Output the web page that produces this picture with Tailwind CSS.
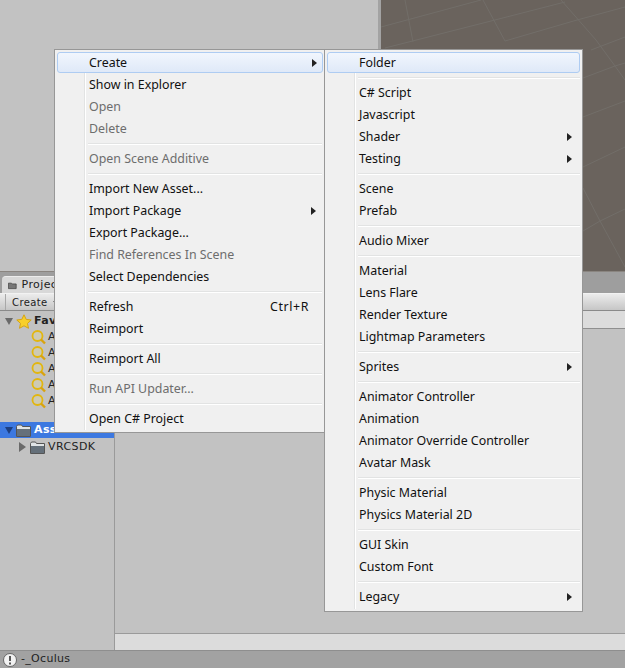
<!DOCTYPE html>
<html lang="en">
<head>
  <meta charset="UTF-8" />
  <title>Unity Create menu</title>
  <script src="https://cdn.jsdelivr.net/npm/@tailwindcss/browser@4"></script>
</head>
<body class="relative w-[625px] h-[668px] overflow-hidden bg-[#c2c2c2] font-['DejaVu_Sans',sans-serif] text-[11px] text-[#222]">

  <!-- editor behind the menus -->
  <div class="flex flex-col h-full">
    <div class="flex h-[271px] shrink-0">
      <div class="w-[381px] bg-[#c2c2c2] border-r-[3px] border-[#a3a3a3]"></div>
      <div class="flex-1 bg-[#6a635d]">
        <svg class="block" width="244" height="271" viewBox="381 0 244 271" fill="none" stroke="#726e69" stroke-width="1">
          <path d="M381 27L481 0M385 48L491 21L565 2M505 41L577 20L625 7M591 50L625 37" />
          <path d="M583 78L615 66L625 63M583 117L625 101M583 167L625 147M583 231L600 221L625 209" />
          <path d="M405 0L413 42M483 0L505 41M561 0L596 40L615 66L625 80M583 188L600 221L625 267" />
        </svg>
      </div>
    </div>
    <div class="flex flex-col flex-1 min-h-0">
      <div class="flex items-end h-[22px] shrink-0 bg-[#9e9e9e] border-t border-[#8a8580]">
        <div class="flex items-center gap-[5px] ml-[2px] pl-[6px] h-[17px] w-[60px] bg-[#d8d8d8] border-t border-[#ececec] rounded-t-sm">
          <svg width="11" height="9" viewBox="0 0 11 9"><path d="M.5 1.500h4l1 1h5v6h-10z" fill="#777" stroke="#444"/></svg>
          <span class="tracking-[0.4px]">Project</span>
        </div>
      </div>
      <div class="flex items-center h-[18px] shrink-0 bg-gradient-to-b from-[#ececec] to-[#c6c6c6] border-t border-[#f2f2f2] border-b-[#8a8a8a] border-b text-[10px] tracking-[0.4px]">
        <div class="flex items-center h-full pl-[6px] pr-[5px] ml-[5px] border-l border-[#a8a8a8]">Create</div>
        <svg width="5" height="3" viewBox="0 0 5 3"><path d="M0 0h5L2.500 3z" fill="#555"/></svg>
      </div>
      <div class="flex flex-1 min-h-0">
        <div class="flex flex-col w-[115px] shrink-0 border-r border-[#9a9a9a] bg-[#c2c2c2] pt-[2px] tracking-[0.4px]">
          <div class="flex items-center h-[16px] pl-[5px] font-bold">
            <svg class="shrink-0" width="8" height="7" viewBox="0 0 8 7"><path d="M0 0h8L4 7z" fill="#6a6a6a"/></svg>
            <svg class="shrink-0 ml-[3px]" width="16" height="15" viewBox="0 0 16 15"><path d="M8 .8l2.200 4.600 5 .6-3.700 3.400 1 4.900L8 11.800l-4.500 2.500 1-4.900L.8 6l5-.6z" fill="#f8cf2a" stroke="#d5a414"/></svg>
            <span class="ml-[2px]">Favorites</span>
          </div>
          <div class="flex items-center h-[16px] pl-[31px] gap-[2px]">
            <svg class="shrink-0" width="15" height="15" viewBox="0 0 15 15"><circle cx="6.500" cy="6" r="5" fill="#cdcab4" stroke="#e2b60f" stroke-width="1.800"/><path d="M10 9.500l4 4" stroke="#d9a30e" stroke-width="2.400"/></svg><span>All</span>
          </div>
          <div class="flex items-center h-[16px] pl-[31px] gap-[2px]">
            <svg class="shrink-0" width="15" height="15" viewBox="0 0 15 15"><circle cx="6.500" cy="6" r="5" fill="#cdcab4" stroke="#e2b60f" stroke-width="1.800"/><path d="M10 9.500l4 4" stroke="#d9a30e" stroke-width="2.400"/></svg><span>All</span>
          </div>
          <div class="flex items-center h-[16px] pl-[31px] gap-[2px]">
            <svg class="shrink-0" width="15" height="15" viewBox="0 0 15 15"><circle cx="6.500" cy="6" r="5" fill="#cdcab4" stroke="#e2b60f" stroke-width="1.800"/><path d="M10 9.500l4 4" stroke="#d9a30e" stroke-width="2.400"/></svg><span>All</span>
          </div>
          <div class="flex items-center h-[16px] pl-[31px] gap-[2px]">
            <svg class="shrink-0" width="15" height="15" viewBox="0 0 15 15"><circle cx="6.500" cy="6" r="5" fill="#cdcab4" stroke="#e2b60f" stroke-width="1.800"/><path d="M10 9.500l4 4" stroke="#d9a30e" stroke-width="2.400"/></svg><span>All</span>
          </div>
          <div class="flex items-center h-[16px] pl-[31px] gap-[2px]">
            <svg class="shrink-0" width="15" height="15" viewBox="0 0 15 15"><circle cx="6.500" cy="6" r="5" fill="#cdcab4" stroke="#e2b60f" stroke-width="1.800"/><path d="M10 9.500l4 4" stroke="#d9a30e" stroke-width="2.400"/></svg><span>All</span>
          </div>
          <div class="flex items-center h-[16px] mt-[13px] pl-[5px] bg-[#3c78e0] text-white font-bold">
            <svg class="shrink-0" width="8" height="7" viewBox="0 0 8 7"><path d="M0 0h8L4 7z" fill="#1d3f80"/></svg>
            <svg class="shrink-0 ml-[3px]" width="15" height="13" viewBox="0 0 15 13"><path d="M.5 2.500l1-1.500h4l1 1.500h8v10h-14z" fill="#dfe3e5" stroke="#555"/><path d="M1 5h13v7H1z" fill="#65707a"/></svg>
            <span class="ml-[3px]">Assets</span>
          </div>
          <div class="flex items-center h-[16px] mt-[1px] pl-[19px]">
            <svg class="shrink-0" width="7" height="10" viewBox="0 0 7 10"><path d="M0 0l7 5-7 5z" fill="#6a6a6a"/></svg>
            <svg class="shrink-0 ml-[4px]" width="15" height="13" viewBox="0 0 15 13"><path d="M.5 2.500l1-1.500h4l1 1.500h8v10h-14z" fill="#dfe3e5" stroke="#555"/><path d="M1 5h13v7H1z" fill="#65707a"/></svg>
            <span class="ml-[3px]">VRCSDK</span>
          </div>
        </div>
        <div class="flex-1 flex flex-col">
          <div class="h-[18px] bg-[#dcdcdc] border-b border-[#8f8f8f]"></div>
          <div class="flex-1"></div>
          <div class="h-[17px] bg-[#dcdcdc] border-t border-[#9a9a9a]"></div>
        </div>
      </div>
      <div class="flex items-center gap-[4px] h-[18px] shrink-0 bg-[#a2a2a2] border-t border-[#8e8e8e] pl-[3px] tracking-[0.3px]">
        <svg class="shrink-0" width="14" height="14" viewBox="0 0 14 14"><circle cx="7" cy="7" r="6.500" fill="#f2f2f2" stroke="#666"/><path d="M7 3v5M7 9.500v2" stroke="#555" stroke-width="2"/></svg>
        <span>-_Oculus</span>
      </div>
    </div>
  </div>

  <!-- context menu -->
  <div class="absolute left-[54px] top-[49px] w-[271px] h-[384px] bg-[#f0f0f0] border border-[#979797] p-[2px] font-['Noto_Sans',sans-serif] text-[12.4px] leading-[21px] text-[#111]">
    <div class="absolute left-[29px] top-[2px] bottom-[2px] w-[2px] bg-[#e2e3e3] border-r border-white"></div>
    <div class="relative flex flex-col">
      <div class="flex justify-between items-center h-[21px] mb-[1px] -mr-[1px] pl-[31px] pr-[5px] rounded-[3px] border border-[#aeccf2] bg-gradient-to-b from-[#f1f6fd] to-[#dfe9f8] leading-[19px]"><span>Create</span><span class="border-y-[4px] border-l-[5px] border-y-transparent border-l-[#222]"></span></div>
      <div class="h-[22px] pl-[32px]">Show in Explorer</div>
      <div class="h-[22px] pl-[32px] text-[#6d6d6d]">Open</div>
      <div class="h-[22px] pl-[32px] text-[#6d6d6d]">Delete</div>
      <div class="h-[8px] ml-[31px] flex flex-col justify-center"><div class="h-[2px] bg-[#e2e3e3] border-b border-white"></div></div>
      <div class="h-[22px] pl-[32px] text-[#6d6d6d]">Open Scene Additive</div>
      <div class="h-[8px] ml-[31px] flex flex-col justify-center"><div class="h-[2px] bg-[#e2e3e3] border-b border-white"></div></div>
      <div class="h-[22px] pl-[32px]">Import New Asset...</div>
      <div class="flex justify-between items-center h-[22px] pl-[32px] pr-[6px]"><span class="mb-[1px]">Import Package</span><span class="border-y-[4px] border-l-[5px] border-y-transparent border-l-[#222]"></span></div>
      <div class="h-[22px] pl-[32px]">Export Package...</div>
      <div class="h-[22px] pl-[32px] text-[#6d6d6d]">Find References In Scene</div>
      <div class="h-[22px] pl-[32px]">Select Dependencies</div>
      <div class="h-[8px] ml-[31px] flex flex-col justify-center"><div class="h-[2px] bg-[#e2e3e3] border-b border-white"></div></div>
      <div class="flex justify-between h-[22px] pl-[32px] pr-[13px]"><span>Refresh</span><span class="tracking-[0.6px]">Ctrl+R</span></div>
      <div class="h-[22px] pl-[32px]">Reimport</div>
      <div class="h-[8px] ml-[31px] flex flex-col justify-center"><div class="h-[2px] bg-[#e2e3e3] border-b border-white"></div></div>
      <div class="h-[22px] pl-[32px]">Reimport All</div>
      <div class="h-[8px] ml-[31px] flex flex-col justify-center"><div class="h-[2px] bg-[#e2e3e3] border-b border-white"></div></div>
      <div class="h-[22px] pl-[32px] text-[#6d6d6d]">Run API Updater...</div>
      <div class="h-[8px] ml-[31px] flex flex-col justify-center"><div class="h-[2px] bg-[#e2e3e3] border-b border-white"></div></div>
      <div class="h-[22px] pl-[32px]">Open C# Project</div>
    </div>
  </div>

  <!-- create submenu -->
  <div class="absolute left-[324px] top-[49px] w-[259px] h-[563px] bg-[#f0f0f0] border border-[#979797] p-[2px] font-['Noto_Sans',sans-serif] text-[12.4px] leading-[21px] text-[#111]">
    <div class="absolute left-[29px] top-[2px] bottom-[2px] w-[2px] bg-[#e2e3e3] border-r border-white"></div>
    <div class="relative flex flex-col">
      <div class="h-[21px] mb-[1px] pl-[31px] rounded-[3px] border border-[#aeccf2] bg-gradient-to-b from-[#f1f6fd] to-[#dfe9f8] leading-[19px]">Folder</div>
      <div class="h-[8px] ml-[31px] flex flex-col justify-center"><div class="h-[2px] bg-[#e2e3e3] border-b border-white"></div></div>
      <div class="h-[22px] pl-[32px]">C# Script</div>
      <div class="h-[22px] pl-[32px]">Javascript</div>
      <div class="flex justify-between items-center h-[22px] pl-[32px] pr-[8px]"><span class="mb-[1px]">Shader</span><span class="border-y-[4px] border-l-[5px] border-y-transparent border-l-[#222]"></span></div>
      <div class="flex justify-between items-center h-[22px] pl-[32px] pr-[8px]"><span class="mb-[1px]">Testing</span><span class="border-y-[4px] border-l-[5px] border-y-transparent border-l-[#222]"></span></div>
      <div class="h-[8px] ml-[31px] flex flex-col justify-center"><div class="h-[2px] bg-[#e2e3e3] border-b border-white"></div></div>
      <div class="h-[22px] pl-[32px]">Scene</div>
      <div class="h-[22px] pl-[32px]">Prefab</div>
      <div class="h-[8px] ml-[31px] flex flex-col justify-center"><div class="h-[2px] bg-[#e2e3e3] border-b border-white"></div></div>
      <div class="h-[22px] pl-[32px]">Audio Mixer</div>
      <div class="h-[8px] ml-[31px] flex flex-col justify-center"><div class="h-[2px] bg-[#e2e3e3] border-b border-white"></div></div>
      <div class="h-[22px] pl-[32px]">Material</div>
      <div class="h-[22px] pl-[32px]">Lens Flare</div>
      <div class="h-[22px] pl-[32px]">Render Texture</div>
      <div class="h-[22px] pl-[32px]">Lightmap Parameters</div>
      <div class="h-[8px] ml-[31px] flex flex-col justify-center"><div class="h-[2px] bg-[#e2e3e3] border-b border-white"></div></div>
      <div class="flex justify-between items-center h-[22px] pl-[32px] pr-[8px]"><span class="mb-[1px]">Sprites</span><span class="border-y-[4px] border-l-[5px] border-y-transparent border-l-[#222]"></span></div>
      <div class="h-[8px] ml-[31px] flex flex-col justify-center"><div class="h-[2px] bg-[#e2e3e3] border-b border-white"></div></div>
      <div class="h-[22px] pl-[32px]">Animator Controller</div>
      <div class="h-[22px] pl-[32px]">Animation</div>
      <div class="h-[22px] pl-[32px]">Animator Override Controller</div>
      <div class="h-[22px] pl-[32px]">Avatar Mask</div>
      <div class="h-[8px] ml-[31px] flex flex-col justify-center"><div class="h-[2px] bg-[#e2e3e3] border-b border-white"></div></div>
      <div class="h-[22px] pl-[32px]">Physic Material</div>
      <div class="h-[22px] pl-[32px]">Physics Material 2D</div>
      <div class="h-[8px] ml-[31px] flex flex-col justify-center"><div class="h-[2px] bg-[#e2e3e3] border-b border-white"></div></div>
      <div class="h-[22px] pl-[32px]">GUI Skin</div>
      <div class="h-[22px] pl-[32px]">Custom Font</div>
      <div class="h-[8px] ml-[31px] flex flex-col justify-center"><div class="h-[2px] bg-[#e2e3e3] border-b border-white"></div></div>
      <div class="flex justify-between items-center h-[22px] pl-[32px] pr-[8px]"><span class="mb-[1px]">Legacy</span><span class="border-y-[4px] border-l-[5px] border-y-transparent border-l-[#222]"></span></div>
    </div>
  </div>
</body>
</html>
